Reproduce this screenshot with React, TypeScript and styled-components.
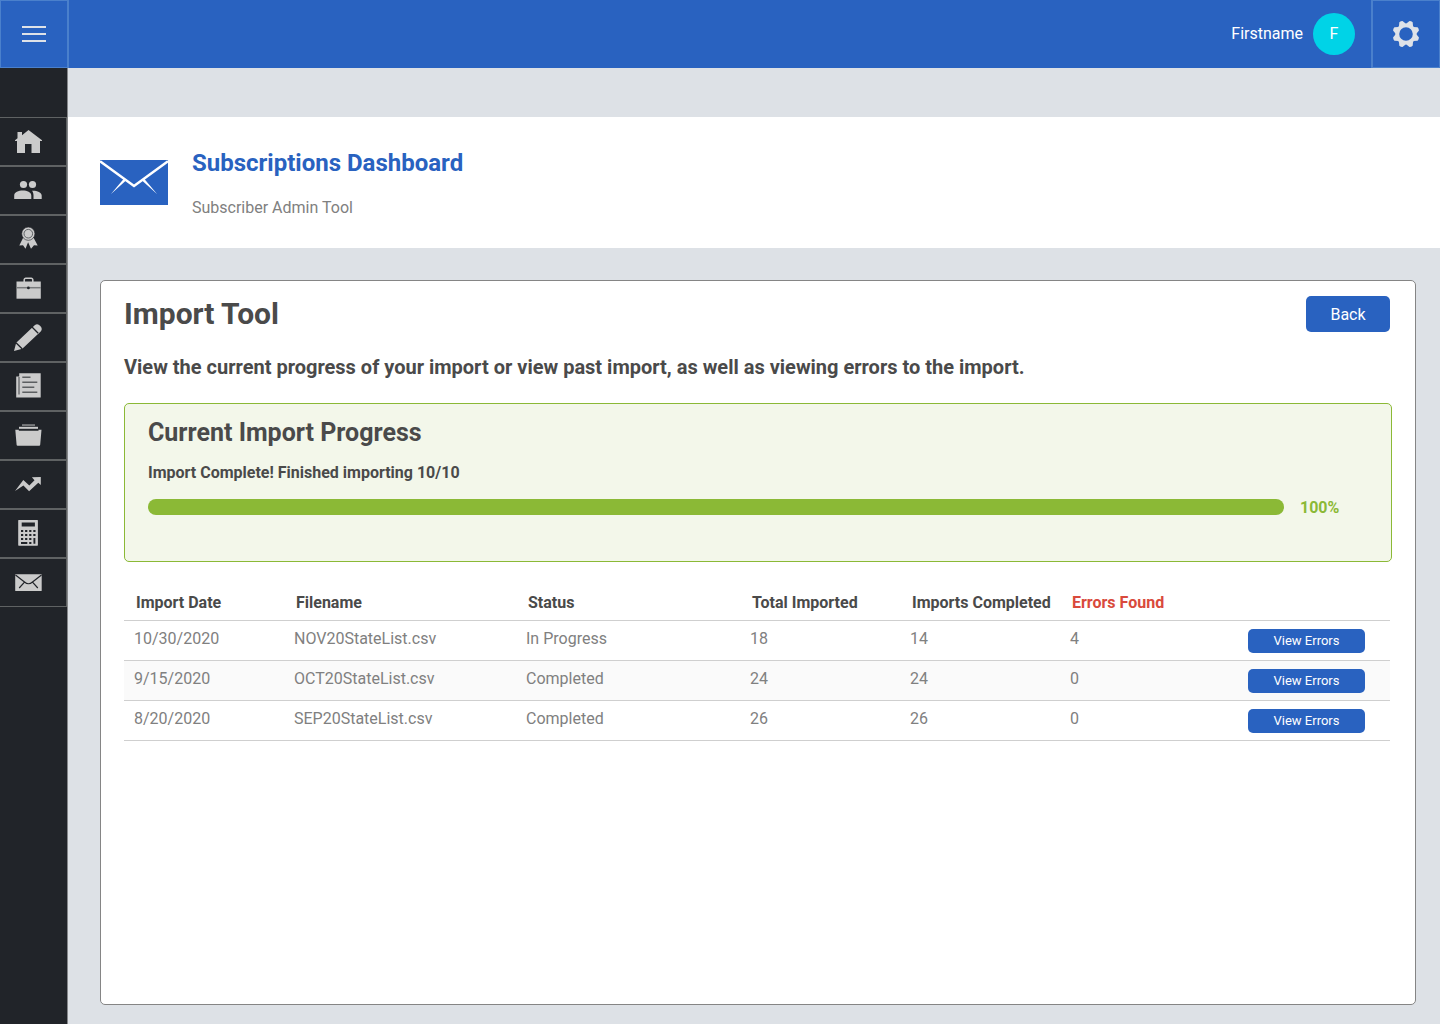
import React from "react";
import styled, { createGlobalStyle } from "styled-components";

const color = {
  blue: "#2962c0",
  blueLine: "#4a80cc",
  dark: "#212429",
  page: "#dde1e6",
  icon: "#cbcbcb",
  line: "#5f6263",
  heading: "#4a4a4a",
  text: "#808080",
  green: "#8bb936",
  red: "#d94a3c",
};

const GlobalStyle = createGlobalStyle`
  *, *::before, *::after { box-sizing: border-box; }
  body { margin: 0; font-family: Roboto, "Liberation Sans", sans-serif; font-size: 16px; line-height: 20px; color: ${color.text}; background: ${color.page}; }
  h1, h2, h3, p { margin: 0; }
  button { font-family: inherit; cursor: pointer; }
`;

const Shell = styled.div`
  min-height: 100vh;
  display: flex;
  flex-direction: column;
`;

const TopBar = styled.header`
  display: flex;
  align-items: center;
  justify-content: space-between;
  height: 68px;
  background: ${color.blue};
`;

const SquareButton = styled.button<{ $side: "left" | "right" }>`
  display: flex;
  align-items: center;
  justify-content: center;
  width: 69px;
  height: 68px;
  padding: 0;
  background: none;
  border: 1px solid ${color.blueLine};
  border-${(p) => (p.$side === "left" ? "right" : "left")}-width: 2px;
`;

const Account = styled.div`
  display: flex;
  align-items: center;
  color: #fff;
`;

const Avatar = styled.span`
  display: flex;
  align-items: center;
  justify-content: center;
  width: 42px;
  height: 42px;
  margin: 0 16px 0 10px;
  border-radius: 50%;
  background: #00d3e7;
`;

const Body = styled.div`
  flex: 1;
  display: flex;
`;

const Sidebar = styled.nav`
  flex: none;
  width: 68px;
  padding-top: 49px;
  background: ${color.dark};
  border-right: 1px solid #85878a;
`;

const SideLink = styled.a`
  display: flex;
  height: 49px;
  padding: 10px 0 0 14px;
  border: 1px solid ${color.line};
  border-left: 0;
  color: ${color.icon};
`;

const Main = styled.main`
  flex: 1;
  min-width: 0;
  display: flex;
  flex-direction: column;
  padding-top: 49px;
`;

const PageHead = styled.section`
  display: flex;
  align-items: center;
  gap: 24px;
  height: 131px;
  padding: 0 32px;
  background: #fff;
`;

const PageTitle = styled.h1`
  margin-bottom: 20px;
  font-size: 24px;
  line-height: 30px;
  font-weight: 700;
  color: ${color.blue};
`;

const Card = styled.section`
  flex: 1;
  margin: 32px 24px 19px 32px;
  padding: 15px 23px;
  background: #fff;
  border: 1px solid #858585;
  border-radius: 5px;
`;

const CardHead = styled.div`
  display: flex;
  align-items: center;
  justify-content: space-between;
  padding-right: 2px;
`;

const CardTitle = styled.h2`
  font-size: 30px;
  line-height: 36px;
  font-weight: 700;
  color: ${color.heading};
`;

const Lead = styled.p`
  margin: 23px 0 24px;
  font-size: 20px;
  line-height: 24px;
  font-weight: 700;
  color: ${color.heading};
`;

const Button = styled.button`
  display: block;
  width: 84px;
  height: 36px;
  padding: 0;
  border: 0;
  border-radius: 5px;
  background: ${color.blue};
  color: #fff;
  font-size: 16px;
`;

const SmallButton = styled(Button)`
  width: 117px;
  height: 24px;
  font-size: small;
`;

const Progress = styled.section`
  min-height: 159px;
  padding: 14px 23px;
  border: 1px solid ${color.green};
  border-radius: 5px;
  background: #f3f7ea;
`;

const ProgressTitle = styled.h3`
  font-size: 25px;
  line-height: 30px;
  font-weight: 700;
  color: ${color.heading};
`;

const ProgressNote = styled.p`
  margin: 15px 0 16px;
  font-weight: 700;
  color: ${color.heading};
`;

const Meter = styled.div`
  display: flex;
  align-items: flex-start;
  gap: 16px;
  font-weight: 700;
  color: ${color.green};
`;

const Track = styled.div`
  flex: 1;
  height: 16px;
  border-radius: 8px;
`;

const Fill = styled.div`
  height: 100%;
  border-radius: 8px;
  background: ${color.green};
`;

const Percent = styled.span`
  width: 68px;
  line-height: 18px;
`;

const TableArea = styled.div`
  padding: 22px 2px 0 0;
`;

const Table = styled.table`
  width: 100%;
  table-layout: fixed;
  border-collapse: separate;
  border-spacing: 0;
  text-align: left;
`;

const HeadCell = styled.th<{ $w?: number; $alert?: boolean }>`
  width: ${(p) => (p.$w ? `${p.$w}px` : "auto")};
  height: 37px;
  padding: 2px 0 0 12px;
  border-bottom: 1px solid #cfcfcf;
  font-weight: 700;
  white-space: nowrap;
  color: ${(p) => (p.$alert ? color.red : color.heading)};
`;

const Row = styled.tr`
  &:nth-child(even) { background: #fafafa; }
`;

const Cell = styled.td`
  height: 40px;
  padding: 0 0 4px 10px;
  border-bottom: 1px solid #cfcfcf;
`;

const ActionCell = styled(Cell)`
  padding: 0 0 0 10px;
`;

const icons: { name: string; art: React.ReactNode }[] = [
  {
    name: "Home",
    art: <path d="M3.500 4H8v3.200L14.500 2 28 12.200V13h-2v12h-8.500v-9h-6.500v9H3V13H1v-.8l2.500-2z" />,
  },
  {
    name: "Members",
    art: (
      <>
        <circle cx="9.500" cy="7.500" r="3.600" />
        <circle cx="18.500" cy="7.500" r="3.600" />
        <path d="M.2 22v-3.500C.2 15.200 4.500 13.600 8.800 13.600s8.500 1.600 8.500 4.900V22zM18 13.700c4.500-.3 9.700 1.300 9.700 4.800V22h-8.200v-3.500c0-2-.4-3.500-1.500-4.800z" />
      </>
    ),
  },
  {
    name: "Awards",
    art: (
      <>
        <path d="M9 12l-3.700 7.500 3.700-.3 2.500 3.500 2.600-6.500L17 22.700l3-3.500 3.700.3-4-7.500z" />
        <circle cx="14.300" cy="7.700" r="6.600" stroke={color.dark} strokeWidth=".6" />
        <circle cx="14.300" cy="7.700" r="4.300" fill="none" stroke="#55585b" strokeWidth=".9" />
      </>
    ),
  },
  {
    name: "Jobs",
    art: (
      <>
        <path d="M10.200 7V4.800a1.600 1.600 0 0 1 1.600-1.600h5.400a1.600 1.600 0 0 1 1.600 1.600V7" fill="none" stroke="currentColor" strokeWidth="1.500" />
        <path d="M2.500 6.500h24.300v17.200H2.500z" />
        <path d="M2.500 12.700h24.300" stroke="#77797b" strokeWidth="1.500" />
        <circle cx="14.400" cy="12.900" r="1.400" fill={color.dark} />
      </>
    ),
  },
  {
    name: "Edit",
    art: (
      <>
        <path d="M0 27l2.200-8.200L20.700 1.200q3-2 5.600.8 2.700 2.600.4 5.600L8.300 24.800z" />
        <path d="M18 3l6.200 6.300M2 18.800l6.300 6.200" fill="none" stroke={color.dark} strokeWidth="1.300" />
      </>
    ),
  },
  {
    name: "News",
    art: (
      <>
        <path d="M5.200.3h21.500v24.200H2.200V3.500h3z" />
        <path d="M5 4v17.500" stroke={color.dark} strokeWidth=".8" />
        <path d="M8.300 4.300h8.200M8.300 9.300h15M8.300 14.300h12M8.300 19.300h15" stroke="#5c5f61" strokeWidth="1.500" />
      </>
    ),
  },
  {
    name: "Files",
    art: (
      <>
        <path d="M8 2.300h13v1.500H8z" opacity=".65" />
        <path d="M5 4.800h19v2H5z" />
        <path d="M1.300 7.700h3.500v1h19.700v-1h3l-1.300 15q-.1 1-1 1H3.600q-.9 0-1-1z" />
      </>
    ),
  },
  {
    name: "Trends",
    art: <path d="M1 19.900L9.300 9l6 5.400 5.200-5.200-2.600-2.900 8.900-.4V14l-2.500-2.300-9.200 8.500-5.700-5.600z" />,
  },
  {
    name: "Calculator",
    art: (
      <>
        <rect x="4.200" y="0" width="19.700" height="25.700" rx=".6" />
        <path d="M7.700 2.500h13.200v4H7.700z" fill={color.dark} />
        <path
          d="M7 11h2.200M11.100 11h2.200M15.200 11h2.200M19.300 11h2.200M7 15h2.200M11.100 15h2.200M15.200 15h2.200M19.300 15h2.200M7 19h2.200M11.100 19h2.200M15.200 19h2.200M7 23h6.300M15.200 23h2.200M20.400 18v5.800"
          stroke={color.dark}
          strokeWidth="1.900"
        />
      </>
    ),
  },
  {
    name: "Mail",
    art: (
      <>
        <rect x="1.200" y="5.200" width="26.500" height="16.800" rx=".5" />
        <path d="M1.500 6l9 7q4 3.500 8 0l9-7M10.500 13.200L5.200 19M18.500 13.200l5.300 5.800" fill="none" stroke={color.dark} strokeWidth="1.200" />
      </>
    ),
  },
];

const records = [
  ["10/30/2020", "NOV20StateList.csv", "In Progress", "18", "14", "4"],
  ["9/15/2020", "OCT20StateList.csv", "Completed", "24", "24", "0"],
  ["8/20/2020", "SEP20StateList.csv", "Completed", "26", "26", "0"],
];

const Gear = () => (
  <svg width="28" height="28" viewBox="-14 -14 28 28" fill="#dee2e8" aria-hidden="true">
    <circle r="8.700" fill="none" stroke="#dee2e8" strokeWidth="3.800" />
    {[0, 1, 2, 3, 4, 5, 6, 7].map((i) => (
      <path key={i} d="M-3.800-9.400L-1.700-13.300q1.700-.6 3.400 0l2.100 3.900z" transform={`rotate(${22.5 + i * 45})`} />
    ))}
  </svg>
);

export default function App() {
  const done = 10;
  const total = 10;
  const percent = Math.round((done / total) * 100);

  return (
    <Shell>
      <GlobalStyle />
      <TopBar>
        <SquareButton $side="left" aria-label="Menu">
          <svg width="24" height="16" viewBox="0 0 24 16" aria-hidden="true">
            <path d="M0 1h24M0 8h24M0 15h24" stroke="#dee2e8" strokeWidth="2" />
          </svg>
        </SquareButton>
        <Account>
          <span>Firstname</span>
          <Avatar>F</Avatar>
          <SquareButton $side="right" aria-label="Settings">
            <Gear />
          </SquareButton>
        </Account>
      </TopBar>
      <Body>
        <Sidebar aria-label="Main">
          {icons.map((icon) => (
            <SideLink key={icon.name} href="#" aria-label={icon.name}>
              <svg width="28" height="28" viewBox="0 0 28 28" fill="currentColor" aria-hidden="true">
                {icon.art}
              </svg>
            </SideLink>
          ))}
        </Sidebar>
        <Main>
          <PageHead>
            <svg width="68" height="45" viewBox="0 0 68 45" aria-hidden="true">
              <path d="M0 0h68v45H0z" fill={color.blue} />
              <path d="M0 1.200L34 26 68 1.200" fill="none" stroke="#fff" strokeWidth="2.600" />
              <path d="M24 18.500l2 2L11 34zM44 18.500l-2 2L57 34z" fill="#fff" />
            </svg>
            <div>
              <PageTitle>Subscriptions Dashboard</PageTitle>
              <p>Subscriber Admin Tool</p>
            </div>
          </PageHead>
          <Card>
            <CardHead>
              <CardTitle>Import Tool</CardTitle>
              <Button>Back</Button>
            </CardHead>
            <Lead>View the current progress of your import or view past import, as well as viewing errors to the import.</Lead>
            <Progress>
              <ProgressTitle>Current Import Progress</ProgressTitle>
              <ProgressNote>
                Import Complete! Finished importing {done}/{total}
              </ProgressNote>
              <Meter>
                <Track role="progressbar" aria-label="Import progress" aria-valuenow={percent} aria-valuemin={0} aria-valuemax={100}>
                  <Fill style={{ width: `${percent}%` }} />
                </Track>
                <Percent>{percent}%</Percent>
              </Meter>
            </Progress>
            <TableArea>
              <Table>
                <thead>
                  <tr>
                    <HeadCell $w={160}>Import Date</HeadCell>
                    <HeadCell $w={232}>Filename</HeadCell>
                    <HeadCell $w={224}>Status</HeadCell>
                    <HeadCell $w={160}>Total Imported</HeadCell>
                    <HeadCell $w={160}>Imports Completed</HeadCell>
                    <HeadCell $w={178} $alert>Errors Found</HeadCell>
                    <HeadCell aria-label="Actions" />
                  </tr>
                </thead>
                <tbody>
                  {records.map((record) => (
                    <Row key={record[0]}>
                      {record.map((value, i) => (
                        <Cell key={i}>{value}</Cell>
                      ))}
                      <ActionCell>
                        <SmallButton>View Errors</SmallButton>
                      </ActionCell>
                    </Row>
                  ))}
                </tbody>
              </Table>
            </TableArea>
          </Card>
        </Main>
      </Body>
    </Shell>
  );
}
